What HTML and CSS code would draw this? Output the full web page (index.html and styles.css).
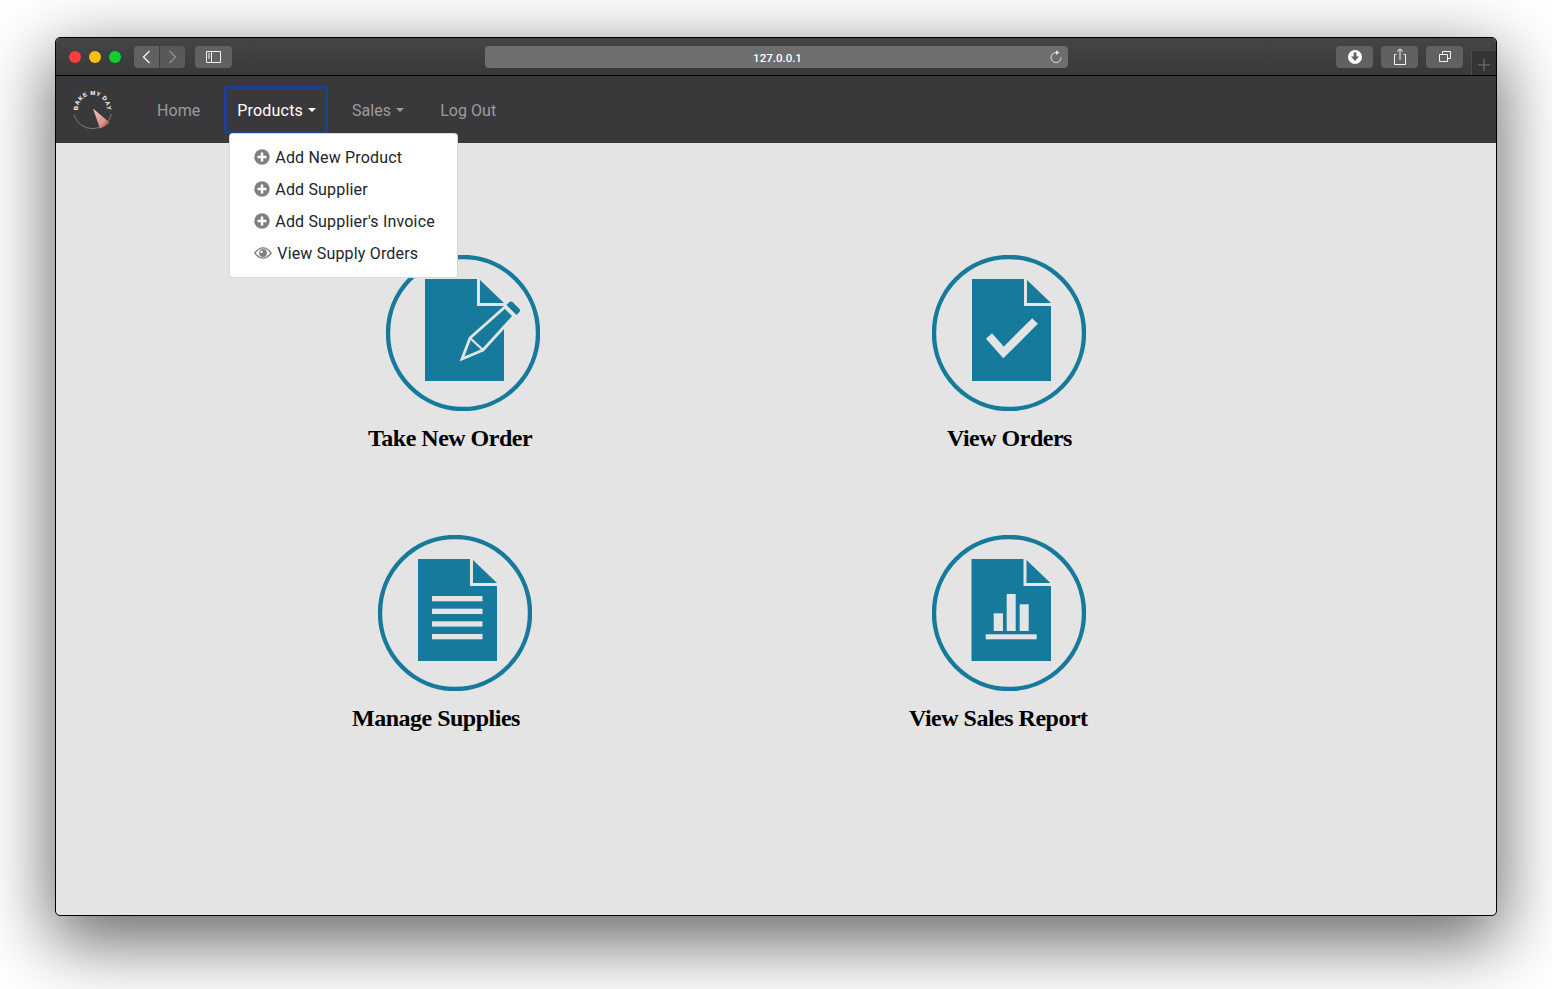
FILE: index.html
```html
<!DOCTYPE html>
<html lang="en">
<head>
  <meta charset="UTF-8">
  <meta name="viewport" content="width=device-width, initial-scale=1.0">
  <title>Bake My Day</title>
  <link rel="stylesheet" href="styles.css">
</head>
<body>
  <div class="window">
    <!-- Browser chrome -->
    <div class="toolbar">
      <span class="dot dot-red"></span>
      <span class="dot dot-yellow"></span>
      <span class="dot dot-green"></span>
      <div class="tool tool-back">
        <svg width="25" height="22" viewBox="0 0 25 22"><path d="M15.5 5 L9.5 11 L15.5 17" fill="none" stroke="#f2f2f2" stroke-width="1.4"/></svg>
      </div>
      <div class="tool tool-forward">
        <svg width="25" height="22" viewBox="0 0 25 22"><path d="M9.5 5 L15.5 11 L9.5 17" fill="none" stroke="#8d8f90" stroke-width="1.4"/></svg>
      </div>
      <div class="tool tool-sidebar">
        <svg width="37" height="22" viewBox="0 0 37 22"><path d="M11.5 5.5 H25.5 V16.5 H11.5 Z M16.5 5.5 V16.5" fill="none" stroke="#f2f2f2"/><path d="M13 8 H15 M13 10 H15 M13 12 H15" stroke="#f2f2f2"/></svg>
      </div>
      <div class="url-bar">
        <span class="url-text">127.0.0.1</span>
        <svg class="url-reload" width="14" height="14" viewBox="0 0 14 14"><path d="M7.5 2.6 A5 5 0 1 0 12 7.5" fill="none" stroke="#e6e6e6" stroke-width="1"/><path d="M7 0.2 L10.4 2.6 L7 5 Z" fill="#e6e6e6"/></svg>
      </div>
      <div class="tool tool-wide tool-download">
        <svg width="37" height="22" viewBox="0 0 37 22"><circle cx="19" cy="11" r="7" fill="#fff"/><path d="M17.6 6.5 H20.4 V10.5 H23 L19 15 L15 10.5 H17.6 Z" fill="#5f6162"/></svg>
      </div>
      <div class="tool tool-wide">
        <svg width="37" height="22" viewBox="0 0 37 22"><path d="M15.5 8.5 H13.5 V18.5 H24.5 V8.5 H22.5" fill="none" stroke="#f2f2f2"/><path d="M19 14 V3 M16 5.6 L19 2.8 L22 5.6" fill="none" stroke="#f2f2f2"/></svg>
      </div>
      <div class="tool tool-wide">
        <svg width="37" height="22" viewBox="0 0 37 22"><path d="M13.5 8.5 H21.5 V15.5 H13.5 Z" fill="none" stroke="#f2f2f2"/><path d="M16.5 8 V5.5 H24.5 V12.5 H22" fill="none" stroke="#f2f2f2"/></svg>
      </div>
      <div class="new-tab">
        <svg width="12" height="12" viewBox="0 0 12 12"><path d="M6 0 V12 M0 6 H12" stroke="#77797a"/></svg>
      </div>
    </div>

    <!-- Site navbar -->
    <nav class="navbar">
      <svg class="logo" width="42" height="42" viewBox="0 0 42 42">
        <defs>
          <path id="logo-arc" d="M8.94 27.75 A14.5 14.5 0 1 1 34.06 27.75"/>
          <linearGradient id="logo-cone" x1="0" y1="0" x2="1" y2="1">
            <stop offset="0" stop-color="#e9d3cb"/>
            <stop offset="0.65" stop-color="#e08f84"/>
            <stop offset="1" stop-color="#8f2f2c"/>
          </linearGradient>
        </defs>
        <path d="M3 26 A19.5 19.5 0 0 0 40.5 25" fill="none" stroke="#8e8e8e" stroke-width="0.8"/>
        <text class="logo-text" text-anchor="middle"><textPath href="#logo-arc" startOffset="50%">BAKE MY DAY</textPath></text>
        <path d="M22 19.5 L38.5 33.5 Q34 38 29 39.5 Z" fill="url(#logo-cone)"/>
      </svg>
      <ul class="nav-list">
        <li class="nav-item"><a class="nav-link">Home</a></li>
        <li class="nav-item nav-item-open">
          <a class="nav-link nav-link-active">Products<span class="caret"></span></a>
          <div class="dropdown">
            <a class="dropdown-item">
              <svg class="plus-icon" width="16" height="16" viewBox="0 0 16 16"><circle cx="8" cy="8" r="7.7" fill="#808080"/><path d="M8 3.6 V12.4 M3.6 8 H12.4" stroke="#fff" stroke-width="2.4"/></svg>
              Add New Product
            </a>
            <a class="dropdown-item">
              <svg class="plus-icon" width="16" height="16" viewBox="0 0 16 16"><circle cx="8" cy="8" r="7.7" fill="#808080"/><path d="M8 3.6 V12.4 M3.6 8 H12.4" stroke="#fff" stroke-width="2.4"/></svg>
              Add Supplier
            </a>
            <a class="dropdown-item">
              <svg class="plus-icon" width="16" height="16" viewBox="0 0 16 16"><circle cx="8" cy="8" r="7.7" fill="#808080"/><path d="M8 3.6 V12.4 M3.6 8 H12.4" stroke="#fff" stroke-width="2.4"/></svg>
              Add Supplier's Invoice
            </a>
            <a class="dropdown-item">
              <svg class="eye-icon" width="18" height="12" viewBox="0 0 18 12"><path d="M0 6 Q4 0.2 9 0.2 Q14 0.2 18 6 Q14 11.8 9 11.8 Q4 11.8 0 6 Z" fill="#808080"/><path d="M1.8 6 Q5 1.6 9 1.6 Q13 1.6 16.2 6 Q13 10.4 9 10.4 Q5 10.4 1.8 6 Z" fill="#fff"/><circle cx="9" cy="6" r="3.9" fill="#808080"/><circle cx="7.6" cy="4.8" r="1.3" fill="#fff"/></svg>
              View Supply Orders
            </a>
          </div>
        </li>
        <li class="nav-item"><a class="nav-link">Sales<span class="caret"></span></a></li>
        <li class="nav-item"><a class="nav-link">Log Out</a></li>
      </ul>
    </nav>

    <!-- Dashboard tiles -->
    <main class="tiles">
      <a class="tile tile-take">
        <svg class="tile-icon" width="154" height="156" viewBox="0 0 154 156">
          <ellipse class="ring" cx="77" cy="78" rx="75" ry="76"/>
          <path class="doc" d="M39 24 H91 V51 H118 V126 H39 Z"/>
          <path class="doc" d="M94 25 L118 48 H94 Z"/>
          <path class="pencil" d="M76 104 L84 83 L119 52 L128 61 L97 95 Z"/>
          <path class="pencil-line" d="M84 83 L97 95"/>
          <path class="doc" d="M123 47.5 Q125 45.5 127 47.5 L133 53.5 Q135 55.5 133 57.5 L130.5 60 L120.5 50 Z"/>
        </svg>
        <span class="tile-label">Take New Order</span>
      </a>
      <a class="tile tile-orders">
        <svg class="tile-icon" width="154" height="156" viewBox="0 0 154 156">
          <ellipse class="ring" cx="77" cy="78" rx="75" ry="76"/>
          <path class="doc" d="M40 24 H92 V51 H119 V126 H40 Z"/>
          <path class="doc" d="M95 25 L119 48 H95 Z"/>
          <path class="check" d="M57 81 L71.5 97.5 L103 66"/>
        </svg>
        <span class="tile-label">View Orders</span>
      </a>
      <a class="tile tile-supplies">
        <svg class="tile-icon" width="154" height="156" viewBox="0 0 154 156">
          <ellipse class="ring" cx="77" cy="78" rx="75" ry="76"/>
          <path class="doc" d="M40 24 H92 V51 H119 V126 H40 Z"/>
          <path class="doc" d="M95 25 L119 48 H95 Z"/>
          <rect class="mark" x="54" y="61" width="50.5" height="5.3"/>
          <rect class="mark" x="54" y="73.7" width="50.5" height="5.3"/>
          <rect class="mark" x="54" y="86.3" width="50.5" height="5.3"/>
          <rect class="mark" x="54" y="99" width="50.5" height="5.3"/>
        </svg>
        <span class="tile-label">Manage Supplies</span>
      </a>
      <a class="tile tile-report">
        <svg class="tile-icon" width="154" height="156" viewBox="0 0 154 156">
          <ellipse class="ring" cx="77" cy="78" rx="75" ry="76"/>
          <path class="doc" d="M39.5 24 H91.5 V51 H119 V126 H39.5 Z"/>
          <path class="doc" d="M94.5 25 L118.5 48 H94.5 Z"/>
          <rect class="mark" x="61.7" y="78.3" width="9.3" height="17.7"/>
          <rect class="mark" x="74.7" y="59" width="9" height="37"/>
          <rect class="mark" x="87.7" y="69.3" width="9" height="26.7"/>
          <rect class="mark" x="53.7" y="99.3" width="51" height="5"/>
        </svg>
        <span class="tile-label">View Sales Report</span>
      </a>
    </main>
  </div>
</body>
</html>
```

FILE: styles.css
```css
* {
  margin: 0;
  padding: 0;
  box-sizing: border-box;
}

body {
  background: #fff;
  height: 989px;
  padding: 37px 55px 73px;
  font-family: Roboto, "Liberation Sans", sans-serif;
  overflow: hidden;
}

.window {
  height: 879px;
  display: flex;
  flex-direction: column;
  border: 1px solid #000;
  border-radius: 5px;
  box-shadow: 0 22px 70px 4px rgba(0, 0, 0, 0.6);
  background: #e4e4e4;
}

/* Browser chrome */
.toolbar {
  height: 38px;
  flex: none;
  display: flex;
  align-items: flex-start;
  padding: 8px 0 0 13px;
  background: linear-gradient(#434546, #37393a);
  border-bottom: 1px solid #000;
  border-radius: 4px 4px 0 0;
}

.dot {
  width: 12px;
  height: 12px;
  border-radius: 50%;
  margin: 5px 8px 0 0;
}

.dot-red { background: #fc3d39; }
.dot-yellow { background: #fdbe0b; }
.dot-green { background: #0fd02f; margin-right: 13px; }

.tool {
  width: 25px;
  height: 22px;
  flex: none;
  background: #5f6162;
  border-radius: 4px;
}

.tool svg {
  display: block;
}

.tool-back { border-radius: 4px 0 0 4px; }
.tool-forward { border-radius: 0 4px 4px 0; margin-left: 1px; background: #58595b; }
.tool-sidebar { width: 37px; margin-left: 10px; }

.url-bar {
  width: 583px;
  height: 22px;
  margin-left: 253px;
  flex: none;
  display: flex;
  align-items: center;
  justify-content: center;
  position: relative;
  background: #6c6e6f;
  border-radius: 4px;
}

.url-text {
  font-size: 11.5px;
  font-weight: 500;
  color: #fff;
  margin: 1px 0 0 2px;
}

.url-reload {
  position: absolute;
  right: 5px;
  top: 4px;
}

.tool-wide { width: 37px; margin-right: 8px; }
.tool-download { margin-left: 268px; }

.new-tab {
  width: 25px;
  height: 25px;
  flex: none;
  align-self: flex-end;
  display: flex;
  align-items: center;
  justify-content: center;
  padding-top: 3px;
  background: #333435;
  border: 1px solid #4b4d4e;
  border-width: 1px 0 0 1px;
}

/* Site navbar */
.navbar {
  height: 67px;
  flex: none;
  display: flex;
  align-items: center;
  padding-left: 15px;
  background: #39393b;
}

.logo {
  display: block;
  flex: none;
}

.logo-text {
  font-family: "Liberation Sans", sans-serif;
  font-size: 6px;
  font-weight: 700;
  letter-spacing: 0.5px;
  fill: #fff;
}

.nav-list {
  display: flex;
  gap: 12px;
  list-style: none;
  margin-left: 32px;
  margin-top: 1px;
}

.nav-item {
  position: relative;
}

.nav-link {
  display: block;
  padding: 0 12px;
  height: 48px;
  line-height: 50px;
  font-size: 16px;
  letter-spacing: 0.05px;
  color: #9c9c9d;
  white-space: nowrap;
}

.nav-link-active {
  color: #fff;
  border: 3px solid #1d3f94;
  border-radius: 4px;
  padding: 0 9px 0 10px;
  line-height: 44px;
  letter-spacing: 0.2px;
}

.caret {
  display: inline-block;
  margin-left: 5px;
  vertical-align: 4px;
  border-top: 4px solid currentColor;
  border-left: 4px solid transparent;
  border-right: 4px solid transparent;
}

.dropdown {
  position: absolute;
  top: 47px;
  left: 5px;
  width: 229px;
  padding: 7px 0 8px;
  background: #fff;
  border: 1px solid rgba(0, 0, 0, 0.15);
  border-radius: 4px;
  z-index: 10;
}

.dropdown-item {
  display: flex;
  align-items: center;
  height: 32px;
  padding-left: 24px;
  font-size: 16px;
  letter-spacing: 0.18px;
  color: #212529;
  white-space: nowrap;
}

.plus-icon {
  flex: none;
  margin-right: 5px;
}

.eye-icon {
  flex: none;
  margin-right: 5px;
}

/* Dashboard tiles */
.tiles {
  flex: 1;
  display: grid;
  grid-template-columns: 720px 720px;
  grid-auto-rows: 280px;
  padding-top: 112px;
}

.tile {
  display: flex;
  flex-direction: column;
  align-items: flex-start;
}

.tile-icon {
  display: block;
  flex: none;
}

.tile-label {
  margin-top: 12px;
  font-family: "Liberation Serif", serif;
  font-size: 24px;
  font-weight: 700;
  letter-spacing: -0.5px;
  line-height: 30px;
  color: #000;
  white-space: nowrap;
}

.tile-take .tile-icon { margin-left: 330px; }
.tile-take .tile-label { margin-left: 312px; }
.tile-orders .tile-icon { margin-left: 156px; }
.tile-orders .tile-label { margin-left: 171px; }
.tile-supplies .tile-icon { margin-left: 322px; }
.tile-supplies .tile-label { margin-left: 296px; }
.tile-report .tile-icon { margin-left: 156px; }
.tile-report .tile-label { margin-left: 133px; }

.ring {
  fill: none;
  stroke: #167a9c;
  stroke-width: 4.4;
}

.doc {
  fill: #167a9c;
}

.mark {
  fill: #e4e4e4;
}

.check {
  fill: none;
  stroke: #e4e4e4;
  stroke-width: 8;
}

.pencil {
  fill: #167a9c;
  stroke: #e4e4e4;
  stroke-width: 2.8;
}

.pencil-line {
  fill: none;
  stroke: #e4e4e4;
  stroke-width: 2.2;
}
```
